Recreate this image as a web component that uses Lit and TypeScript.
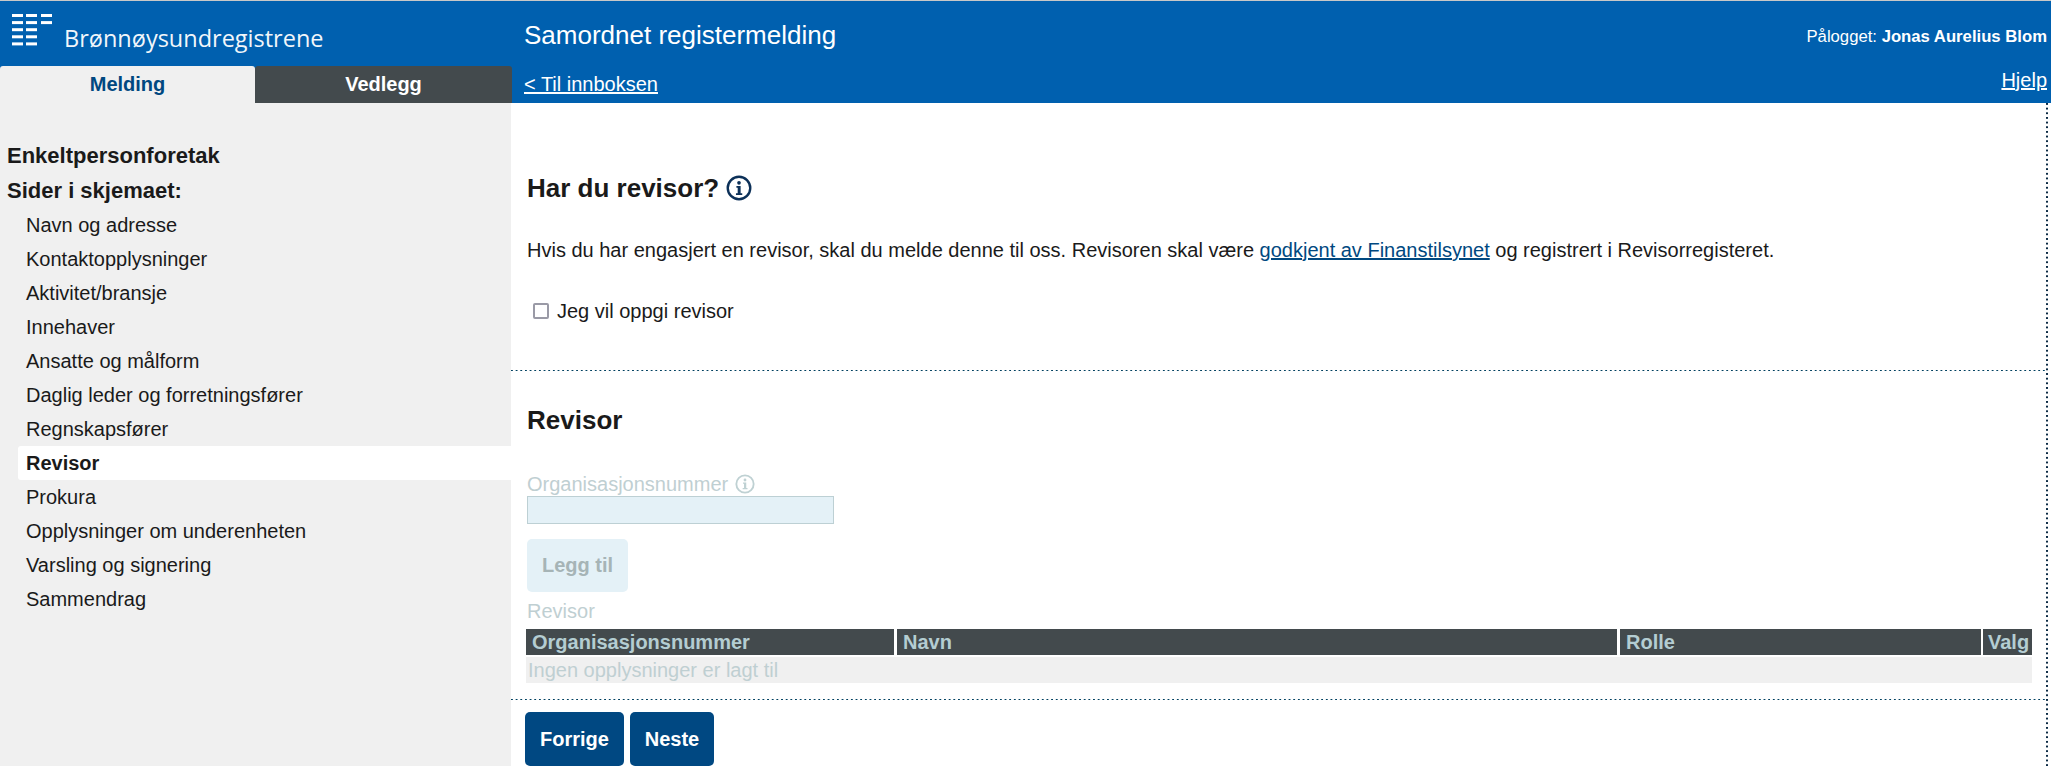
import { LitElement, html, css, svg } from "lit";
import { customElement } from "lit/decorators.js";

const NAV = ["Navn og adresse","Kontaktopplysninger","Aktivitet/bransje","Innehaver","Ansatte og målform","Daglig leder og forretningsfører","Regnskapsfører","Revisor","Prokura","Opplysninger om underenheten","Varsling og signering","Sammendrag"];

const info = (cls: string) => html`<svg class=${cls} viewBox="0 0 24 24" aria-hidden="true">
  <circle cx="12" cy="12" r="10.4" fill="none" stroke="currentColor" stroke-width="2.2"></circle>
  <circle cx="12" cy="7.2" r="1.7" fill="currentColor"></circle>
  <path d="M9.6 10.2h3.9v6.6h1.5v1.6H9.2v-1.6h1.6v-5H9.6z" fill="currentColor"></path>
</svg>`;

const logoBars = svg`<g fill="#fff">
  ${[0,1,2,3,4].map(r => [0,1].map(c => svg`<rect x=${c*14} y=${r*7.1} width="11" height="3"></rect>`))}
  <rect x="29" y="0" width="11" height="3"></rect>
  <rect x="29" y="7.1" width="11" height="3"></rect>
</g>`;

@customElement("app-root")
export class AppRoot extends LitElement {
  static styles = css`
    :host { display: block; width: 2051px; height: 766px; overflow: hidden; font-family: "Liberation Sans", Arial, sans-serif; color: #1a1a1a; background: #fff; }
    a { color: inherit; }
    .page { display: grid; grid-template-columns: 511px 1fr; grid-template-rows: 102px 663px; border-top: 1px solid #c8c8c8; height: 766px; box-sizing: border-box; }
    .brand { background: #0060af; display: flex; flex-direction: column; }
    .logo { height: 65px; padding: 13px 0 0 12px; box-sizing: border-box; display: flex; color: #fff; }
    .logo svg { width: 41px; height: 33px; flex: none; }
    .logo span { font-family: "Open Sans", sans-serif; font-size: 23.5px; line-height: 30px; margin: 9px 0 0 11px; opacity: .95; white-space: nowrap; }
    .tabs { display: flex; height: 37px; width: 512px; position: relative; z-index: 1; }
    .tab { font-size: 20px; font-weight: 700; display: flex; align-items: center; justify-content: center; padding-bottom: 1px; box-sizing: border-box; }
    .tab.on { width: 255px; background: #f0f0f0; color: #004880; border-radius: 3px 3px 0 0; }
    .tab.off { width: 257px; background: #434a4d; color: #fff; border-radius: 3px 3px 0 0; }
    .top { background: #0060af; color: #fff; display: grid; grid-template-columns: 1fr auto; padding: 0 4px 0 13px; }
    .title { font-size: 26px; line-height: 30px; padding-top: 19px; }
    .user { font-size: 16.7px; line-height: 18px; padding-top: 27px; }
    .back { font-size: 20px; line-height: 22px; align-self: end; padding: 0 0 8px; justify-self: start; }
    .help { font-size: 20px; line-height: 22px; align-self: end; padding: 0 0 12px; text-align: right; }
    .side { background: #f0f0f0; padding: 40px 0 0 7px; }
    .side h2 { margin: 0; font-size: 22px; line-height: 26px; font-weight: 700; padding-bottom: 9px; }
    .side h3 { margin: 0; font-size: 22px; line-height: 26px; font-weight: 700; padding-bottom: 4px; }
    .nav { list-style: none; margin: 0 0 0 11px; padding: 0; }
    .nav li { font-size: 20px; height: 34px; line-height: 34px; padding-left: 8px; }
    .nav li.on { background: #fff; font-weight: 700; border-radius: 3px 0 0 3px; }
    .main { display: flex; flex-direction: column; margin-right: 3px; background: linear-gradient(#0b2a44 0 2px, transparent 2px) right top / 2px 4.67px repeat-y; }
    .s1 { height: 268px; box-sizing: border-box; padding: 70px 0 0 16px; flex: none; background: linear-gradient(90deg, #004060 0 2px, transparent 2px) left bottom / 4.67px 1.5px repeat-x; margin-right: 3px; }
    h1 { margin: 0; font-size: 26px; line-height: 30px; font-weight: 700; display: flex; align-items: center; gap: 7px; }
    .i1 { width: 26px; height: 26px; color: #0c3058; }
    .s1 p { margin: 35px 0 0; font-size: 20px; line-height: 24px; }
    .s1 p a { color: #004880; }
    .check { display: flex; align-items: center; margin-top: 37px; font-size: 20px; line-height: 24px; padding-left: 6px; gap: 8px; }
    .box { width: 16px; height: 16px; border: 2px solid #9a9aa6; border-radius: 2px; box-sizing: border-box; background: #fff; }
    .s2 { height: 329px; box-sizing: border-box; padding: 34px 0 0 14px; color: #bfcfd2; flex: none; background: linear-gradient(90deg, #004060 0 2px, transparent 2px) left bottom / 4.67px 1.5px repeat-x; margin-right: 3px; }
    .s2 h1 { color: #1a1a1a; padding-left: 2px; }
    .lab { font-size: 20px; line-height: 24px; display: flex; align-items: center; gap: 7px; margin-top: 37px; padding-left: 2px; height: 23px; margin-bottom: 1px; }
    .i2 { width: 20px; height: 20px; color: #bfd1d3; }
    .inp { width: 307px; height: 28px; box-sizing: border-box; margin: 0 0 0 2px; background: #e4f1f7; border: 1px solid #bdd0d4; }
    .add { width: 101px; height: 53px; margin: 15px 0 0 2px; background: #e4f1f7; color: #a6b4b6; border-radius: 5px; font-size: 20px; font-weight: 700; display: flex; align-items: center; justify-content: center; }
    .lab2 { font-size: 20px; line-height: 24px; margin: 7px 0 0 2px; height: 30px; }
    .thead { display: grid; grid-template-columns: 368px 720px 361px 48px; gap: 3px; width: 1506px; height: 26px; margin-left: 1px; }
    .thead div { background: #434a4d; color: #b4cdd2; font-size: 20px; font-weight: 700; line-height: 26px; padding-left: 6px; overflow: hidden; white-space: nowrap; min-width: 0; }
    .thead div:last-child { margin-left: -1px; padding-left: 5px; }
    .empty { width: 1506px; height: 26px; margin: 2px 0 0 1px; background: #f0f0f0; font-size: 20px; line-height: 26px; padding-left: 2px; box-sizing: border-box; }
    .s3 { display: flex; gap: 6px; padding: 12px 0 0 14px; }
    .btn { height: 54px; background: #004882; color: #fff; font-size: 20px; font-weight: 700; border-radius: 5px; display: flex; align-items: center; justify-content: center; }
    .b1 { width: 99px; } .b2 { width: 84px; }
  `;
  render() {
    return html`<div class="page">
      <div class="brand">
        <div class="logo"><svg viewBox="0 0 41 33">${logoBars}</svg><span>Brønnøysundregistrene</span></div>
        <div class="tabs"><div class="tab on">Melding</div><div class="tab off">Vedlegg</div></div>
      </div>
      <div class="top">
        <div class="title">Samordnet registermelding</div>
        <div class="user">Pålogget: <b>Jonas Aurelius Blom</b></div>
        <a class="back" href="#">&lt; Til innboksen</a>
        <a class="help" href="#">Hjelp</a>
      </div>
      <div class="side">
        <h2>Enkeltpersonforetak</h2>
        <h3>Sider i skjemaet:</h3>
        <ul class="nav">${NAV.map(n => html`<li class=${n === "Revisor" ? "on" : ""}>${n}</li>`)}</ul>
      </div>
      <div class="main">
        <div class="s1">
          <h1>Har du revisor? ${info("i1")}</h1>
          <p>Hvis du har engasjert en revisor, skal du melde denne til oss. Revisoren skal være <a href="#">godkjent av Finanstilsynet</a> og registrert i Revisorregisteret.</p>
          <div class="check"><span class="box"></span>Jeg vil oppgi revisor</div>
        </div>
        <div class="s2">
          <h1>Revisor</h1>
          <div class="lab">Organisasjonsnummer ${info("i2")}</div>
          <div class="inp"></div>
          <div class="add">Legg til</div>
          <div class="lab2">Revisor</div>
          <div class="thead"><div>Organisasjonsnummer</div><div>Navn</div><div>Rolle</div><div>Valg</div></div>
          <div class="empty">Ingen opplysninger er lagt til</div>
        </div>
        <div class="s3"><div class="btn b1">Forrige</div><div class="btn b2">Neste</div></div>
      </div>
    </div>`;
  }
}
